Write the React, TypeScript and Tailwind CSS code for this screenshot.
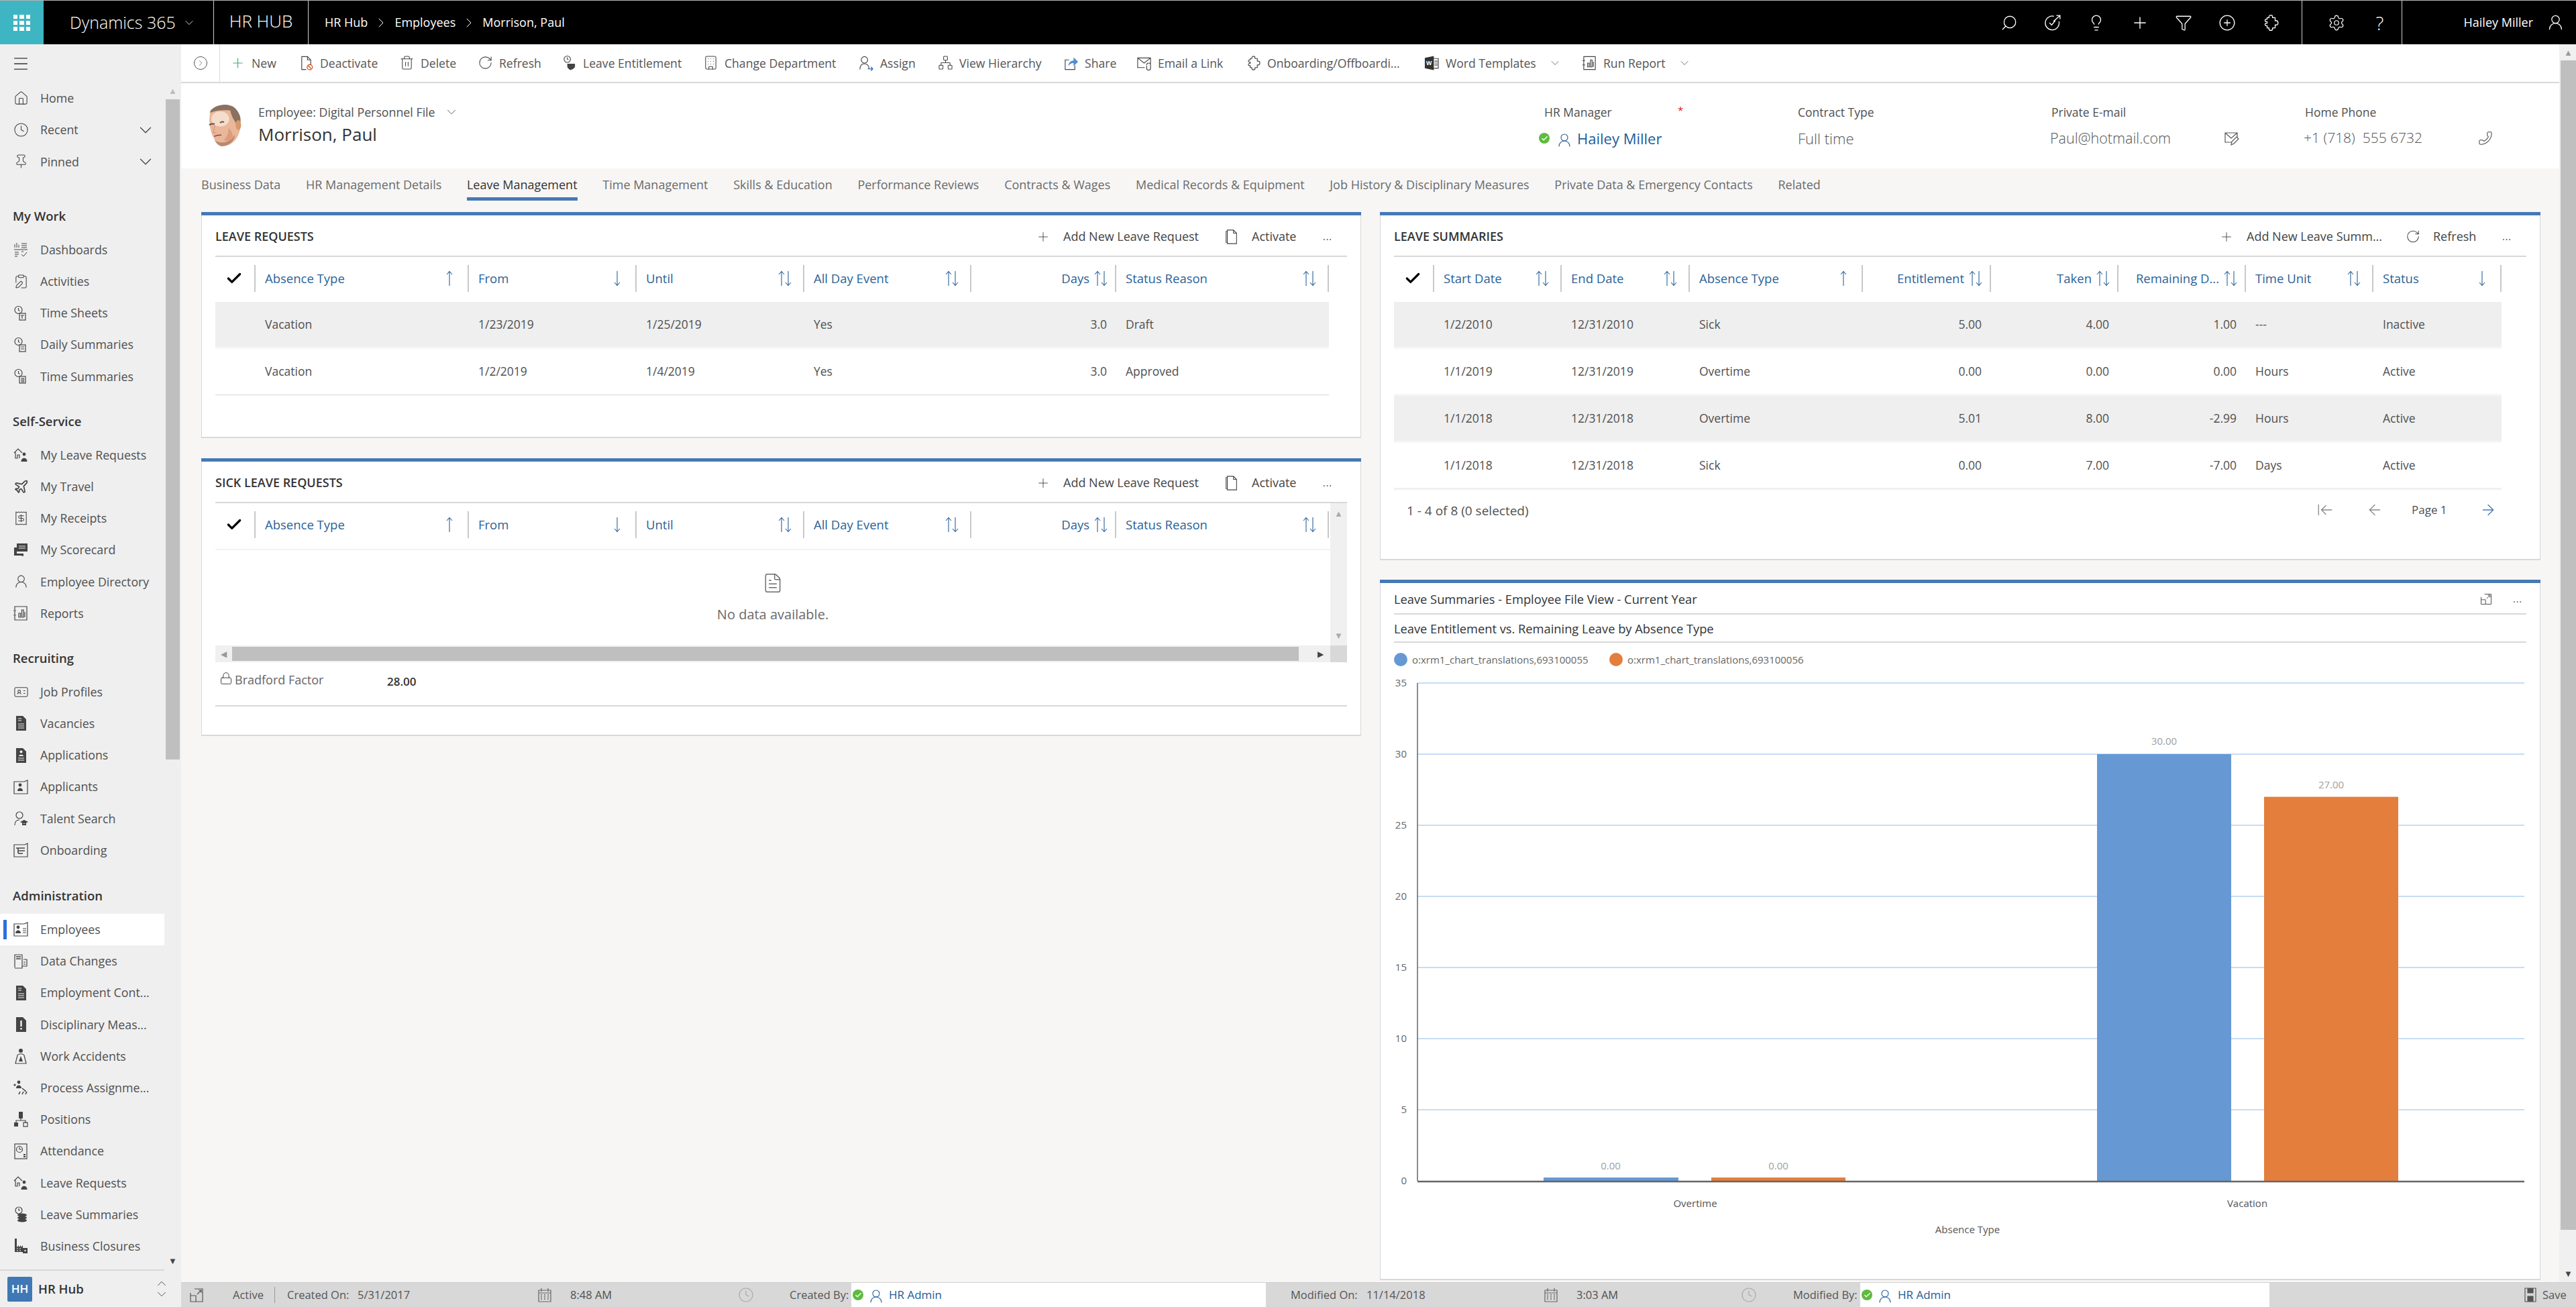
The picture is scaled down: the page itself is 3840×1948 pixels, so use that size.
import type { ReactNode } from "react";
import {
  ArrowLeft,
  ArrowLeftToLine,
  ArrowRight,
  Building,
  Check,
  ChevronDown,
  ChevronRight,
  ChevronUp,
  Clock,
  ClipboardPen,
  FileText,
  Filter,
  House,
  IdCard,
  Lightbulb,
  Lock,
  Menu,
  Network,
  Phone,
  Pin,
  Plane,
  Plus,
  CirclePlus,
  Receipt,
  RotateCw,
  Search,
  Settings,
  Trash2,
  UserRound,
} from "lucide-react";

function Ico({ children, className = "size-[24px]" }: { children: ReactNode; className?: string }) {
  return (
    <svg viewBox="0 0 24 24" fill="none" stroke="currentColor" strokeWidth="1.2" className={className}>
      {children}
    </svg>
  );
}

const thin = { size: 23, strokeWidth: 1.1 };

// ---- custom glyphs
const ClockDoc = ({ kind }: { kind: number }) => (
  <Ico>
    <circle cx="8.5" cy="7" r="5.5" />
    <path d="M8.5 4v3.5l2 1" />
    <rect x="10" y="12" width="9" height="10" fill="#efefef" />
    {kind === 0 && <path d="M12 15h5M14 15v5" />}
    {kind === 1 && <path d="M12 15h5M12 18h5" />}
    {kind === 2 && <path d="M12 15h5M12 17.5h5M12 20h5M14 14v7M16.5 14v7" strokeWidth="0.8" />}
  </Ico>
);
const DashIcon = () => (
  <Ico>
    <path d="M3 4v5M6 2v7M9 5v4M13 3h8M13 6h8M13 9h8M2 12h20M3 16h6M3 19h6M3 22h4M13 19l3 3 5-6M13 15h3" strokeWidth="1" />
  </Ico>
);
const LeaveIcon = () => (
  <Ico>
    <path d="M2 9l6-6 6 6M4 8v9h3v-5h3v5" />
    <circle cx="17" cy="11" r="2.4" fill="currentColor" stroke="none" />
    <path d="M12.5 22c0-7 9-7 9 0z" fill="currentColor" stroke="none" />
  </Ico>
);
const ScoreIcon = () => (
  <Ico>
    <path d="M6 2h16v12H12l-6 0z" fill="currentColor" stroke="none" />
    <path d="M2 8h4v9h10v4l-4-1H2z" fill="currentColor" stroke="none" />
    <path d="M9 6h10M9 9h10" stroke="#efefef" />
  </Ico>
);
const ReportIcon = () => (
  <Ico>
    <path d="M3 7V2h18v20H3v-6" />
    <path d="M1 8h4M1 15h4M3 8v7" />
    <path d="M9 18v-6h2.5v6zM13.5 18V7H16v11zM18 18V10" />
  </Ico>
);
const FilledDoc = ({ mark }: { mark: "lines" | "person" | "bang" }) => (
  <Ico>
    <path d="M5 1h10l5 5v17H5z" fill="currentColor" stroke="none" />
    {mark === "lines" && <path d="M8 5h5M8 8h5M8 13h9M8 16h9M8 19h9" stroke="#efefef" />}
    {mark === "person" && (
      <>
        <circle cx="12.5" cy="6.5" r="2" fill="#efefef" stroke="none" />
        <path d="M9 13c0-3 7-3 7 0z" fill="#efefef" stroke="none" />
        <path d="M8 16h9M8 19h9" stroke="#efefef" />
      </>
    )}
    {mark === "bang" && <path d="M12.5 6v9M12.5 17v2.5" stroke="#efefef" strokeWidth="2.4" />}
  </Ico>
);
const ApplicantIcon = () => (
  <Ico>
    <path d="M2 4h15l5-2v20H2z" />
    <circle cx="11" cy="9" r="2.4" fill="currentColor" stroke="none" />
    <path d="M7 18c0-6 8-6 8 0z" fill="currentColor" stroke="none" />
  </Ico>
);
const TalentIcon = () => (
  <Ico>
    <circle cx="10" cy="7" r="5" />
    <path d="M3 22c0-6 3-8 7-8" />
    <path d="M11 17l6-3 6 3-6 3z M14 19v3h6v-3" fill="currentColor" stroke="none" />
  </Ico>
);
const StairsIcon = () => (
  <Ico>
    <path d="M2 4h16l4-2v20H2z" />
    <path d="M5 9h13M8 13h10M8 17h7M8 9v8" strokeWidth="1.6" />
  </Ico>
);
const EmployeesIcon = () => (
  <Ico>
    <path d="M2 4h15l5-2v20H2z" />
    <circle cx="8" cy="9" r="2.4" fill="currentColor" stroke="none" />
    <path d="M4 18c0-6 8-6 8 0z" fill="currentColor" stroke="none" />
    <path d="M15 11h5M15 14h5M15 17h5" />
  </Ico>
);
const DataChangeIcon = () => (
  <Ico>
    <path d="M3 21V2h11v20H3" />
    <path d="M5 5h7M5 8h7" strokeWidth="1.6" />
    <path d="M16 9h5v10h-7M16 13h3M16 16h3" />
  </Ico>
);
const AccidentIcon = () => (
  <Ico>
    <circle cx="12" cy="4" r="3" fill="currentColor" stroke="none" />
    <path d="M4 23l3-12c1-3 9-3 10 0l3 12z" />
    <path d="M12 12l3 8H9z" fill="currentColor" stroke="none" />
  </Ico>
);
const ProcessIcon = () => (
  <Ico>
    <circle cx="9" cy="4" r="2.4" fill="currentColor" stroke="none" />
    <path d="M5 13c0-6 8-6 8 0z" fill="currentColor" stroke="none" />
    <circle cx="3" cy="8" r="1.6" fill="currentColor" stroke="none" />
    <path d="M14 13l5 4-1 1M9 22l2-4M14 22l2-4M19 22l2-4" strokeWidth="1.6" />
  </Ico>
);
const OrgIcon = () => (
  <Ico>
    <rect x="9" y="1" width="6" height="10" fill="currentColor" stroke="none" />
    <path d="M12 11v3M5 18v-4h14v4" />
    <rect x="2" y="17" width="6" height="6" fill="currentColor" stroke="none" />
    <rect x="16" y="17" width="6" height="6" />
  </Ico>
);
const AttendIcon = () => (
  <Ico>
    <rect x="3" y="1" width="18" height="22" />
    <circle cx="10" cy="9" r="4.5" />
    <path d="M10 6v3h3" />
    <path d="M16 16h3v2h-3zM16 19h3v2h-3z" fill="currentColor" stroke="none" />
  </Ico>
);
const CoinsIcon = () => (
  <Ico>
    <circle cx="9" cy="6" r="5" />
    <path d="M9 3v3h2" />
    <ellipse cx="14" cy="13" rx="7" ry="2.6" fill="currentColor" stroke="none" />
    <ellipse cx="14" cy="17" rx="7" ry="2.6" fill="currentColor" stroke="none" />
    <ellipse cx="14" cy="21" rx="7" ry="2.6" fill="currentColor" stroke="none" />
  </Ico>
);
const ClosureIcon = () => (
  <Ico>
    <path d="M3 1v20h12v-10l-3 3v-3l-3 3v-3l-3 3V1z" fill="currentColor" stroke="none" />
    <rect x="15" y="15" width="7" height="8" fill="currentColor" stroke="none" />
    <path d="M6 16h2M10 16h2M6 19h2M10 19h2" stroke="#efefef" />
    <circle cx="18.5" cy="19" r="1.2" fill="#efefef" stroke="none" />
  </Ico>
);
const DeactivateIcon = () => (
  <Ico>
    <path d="M12 22H5V2h9l5 5v8M14 2v5h5" />
    <circle cx="17.5" cy="18.5" r="4" stroke="#d83b01" />
    <path d="M15 16l5 5" stroke="#d83b01" />
  </Ico>
);
const EntitleIcon = () => (
  <Ico>
    <circle cx="9" cy="6" r="5" />
    <path d="M9 3v3h2" />
    <path d="M9 13h12v4c0 3-4 5-7 6-2-1-5-3-5-6z" fill="currentColor" stroke="none" />
  </Ico>
);
const AssignIcon = () => (
  <Ico>
    <circle cx="9" cy="7" r="5" />
    <path d="M2 22c0-6 3-9 7-9s7 3 7 7" />
    <path d="M14 21h8M19 18l3 3-3 3" stroke="#2b6cb0" />
  </Ico>
);
const ShareIcon = () => (
  <Ico>
    <path d="M9 7H3v15h15v-6" />
    <path d="M8 17c0-6 4-9 8-9V3l7 7-7 7v-5c-3 0-6 1-8 5z" fill="#4f8fd1" stroke="none" />
  </Ico>
);
const EmailLinkIcon = () => (
  <Ico>
    <path d="M13 19H2V4h20v9M2 4l10 8 10-8" />
    <path d="M16 15a3 3 0 0 1 6 0v5a3 3 0 0 1-6 0v-4" />
  </Ico>
);
const WordIcon = () => (
  <Ico>
    <path d="M1 4l14-3v22L1 20z" fill="#333" stroke="none" />
    <path d="M15 5h7v15h-7M16 9h5M16 12h5M16 15h5" />
    <text x="3" y="15" fontSize="9" fill="#fff" stroke="none" fontWeight="700" fontFamily="Open Sans">W</text>
  </Ico>
);
const MailEdit = () => (
  <Ico>
    <path d="M14 18H3V4h18v7M3 4l9 8 9-8" />
    <path d="M12 22l1-5 7-7 3 3-7 7z" fill="#fff" />
  </Ico>
);
const CopyDocIcon = () => (
  <Ico>
    <path d="M5 3H3v18h2" />
    <path d="M5 1h10l5 5v17H5zM15 1v5h5" />
  </Ico>
);
const ChartExpand = () => (
  <Ico className="size-[20px]">
    <path d="M3 8v13h18V3H9" />
    <path d="M3 13h8v8M13 11l6-6M15 5h4v4" />
  </Ico>
);
const SaveIcon = () => (
  <Ico>
    <path d="M4 2h16v20H4z" />
    <path d="M8 2v7h8V2M8 22v-8h8v8" fill="currentColor" />
  </Ico>
);
const CalendarIcon = () => (
  <Ico>
    <path d="M3 5h18v17H3zM3 9h18M7 2v5M17 2v5" />
    <path d="M6 12h2M11 12h2M16 12h2M6 15h2M11 15h2M16 15h2M6 18h2M11 18h2M16 18h2" strokeWidth="1.4" />
  </Ico>
);
const PopOut = () => (
  <Ico>
    <path d="M3 9v13h18V3H9" />
    <path d="M3 13h8v9M13 11l6-6M15 5h4v4" />
  </Ico>
);
const TaskGlyph = () => (
  <Ico className="size-[26px]">
    <path d="M20.5 10a9.5 9.5 0 1 1-7-7" />
    <path d="M7.5 12l3 3 5-6M13 10l9-8M17 2h5v5" />
  </Ico>
);
const PuzzleGlyph = ({ size = "size-[24px]" }: { size?: string }) => (
  <Ico className={size}>
    <path d="M9.5 5V4a2.5 2.5 0 0 1 5 0v1H18v4h1a2.5 2.5 0 0 1 0 6h-1v4h-3.5v1a2.5 2.5 0 0 1-5 0v-1H7v-3H5.5a1.8 1.8 0 0 1 0-3.5H7v-2H5.5a1.8 1.8 0 0 1 0-3.5H7V5z" />
  </Ico>
);

const Presence = () => (
  <span className="flex size-[16px] shrink-0 items-center justify-center rounded-full bg-[#5dbb3f]">
    <Check size={11} strokeWidth={3} className="text-white" />
  </span>
);

const Face = () => (
  <svg viewBox="30 30 150 195" className="h-[65px] w-[50px] shrink-0">
    <path d="M40 70C50 45 110 35 140 60c25 25 40 50 35 80-10 50-35 80-85 82-20-7-35-32-45-62-10-30-10-65-5-90z" fill="#e9b79a" />
    <ellipse cx="85" cy="100" rx="40" ry="34" fill="#f6dccb" />
    <path d="M60 195c30 20 70 10 90-25 0 30-30 52-60 52-15-4-25-17-30-27z" fill="#b98a70" />
    <path d="M120 140c15 10 25 30 20 50-15 10-30 10-40 5 15-15 25-35 20-55z" fill="#dd9d7d" />
    <path d="M40 65C60 35 120 25 150 50c25 25 28 50 25 65l-15 10c-10-15-25-35-30-63-30-2-60-2-90 10z" fill="#8a7160" />
    <ellipse cx="166" cy="127" rx="12" ry="22" fill="#d9986f" />
    <path d="M36 127c5-5 12-7 24-5M84 117c5-5 12-5 18-3" stroke="#5f5148" strokeWidth="6" fill="none" />
    <path d="M58 178c12-5 22-7 32-6" stroke="#8a4a3a" strokeWidth="5" fill="none" />
    <path d="M60 130l-6 30 14 4" stroke="#d79a7e" strokeWidth="4" fill="none" />
  </svg>
);

// ---- nav data
type NavItem = { label: string; icon: ReactNode; active?: boolean };
const navSections: { title: string; top: string; items: NavItem[] }[] = [
  {
    title: "My Work",
    top: "mt-[34px]",
    items: [
      { label: "Dashboards", icon: <DashIcon /> },
      { label: "Activities", icon: <ClipboardPen {...thin} /> },
      { label: "Time Sheets", icon: <ClockDoc kind={0} /> },
      { label: "Daily Summaries", icon: <ClockDoc kind={1} /> },
      { label: "Time Summaries", icon: <ClockDoc kind={2} /> },
    ],
  },
  {
    title: "Self-Service",
    top: "mt-[20px]",
    items: [
      { label: "My Leave Requests", icon: <LeaveIcon /> },
      { label: "My Travel", icon: <Plane size={23} strokeWidth={1.8} /> },
      { label: "My Receipts", icon: <Receipt {...thin} /> },
      { label: "My Scorecard", icon: <ScoreIcon /> },
      { label: "Employee Directory", icon: <UserRound {...thin} /> },
      { label: "Reports", icon: <ReportIcon /> },
    ],
  },
  {
    title: "Recruiting",
    top: "mt-[20px]",
    items: [
      { label: "Job Profiles", icon: <IdCard {...thin} /> },
      { label: "Vacancies", icon: <FilledDoc mark="lines" /> },
      { label: "Applications", icon: <FilledDoc mark="person" /> },
      { label: "Applicants", icon: <ApplicantIcon /> },
      { label: "Talent Search", icon: <TalentIcon /> },
      { label: "Onboarding", icon: <StairsIcon /> },
    ],
  },
  {
    title: "Administration",
    top: "mt-[21px]",
    items: [
      { label: "Employees", icon: <EmployeesIcon />, active: true },
      { label: "Data Changes", icon: <DataChangeIcon /> },
      { label: "Employment Cont...", icon: <FilledDoc mark="lines" /> },
      { label: "Disciplinary Meas...", icon: <FilledDoc mark="bang" /> },
      { label: "Work Accidents", icon: <AccidentIcon /> },
      { label: "Process Assignme...", icon: <ProcessIcon /> },
      { label: "Positions", icon: <OrgIcon /> },
      { label: "Attendance", icon: <AttendIcon /> },
      { label: "Leave Requests", icon: <LeaveIcon /> },
      { label: "Leave Summaries", icon: <CoinsIcon /> },
      { label: "Business Closures", icon: <ClosureIcon /> },
    ],
  },
];

function NavRow({ item, chevron }: { item: NavItem; chevron?: boolean }) {
  return (
    <div className={`flex h-[47.2px] shrink-0 items-center ${item.active ? "bg-white pl-[5px]" : "pl-[19px]"}`}>
      {item.active && <span className="mr-[9px] h-[29px] w-[5px] bg-[#2d6fdc]" />}
      <span className="flex w-[24px] shrink-0 justify-center text-[#444]">{item.icon}</span>
      <span className="ml-[17px] flex-1 whitespace-nowrap text-[17.8px] text-[#505050]">{item.label}</span>
      {chevron && <ChevronDown size={30} strokeWidth={1} className="mr-[13px] text-[#444]" />}
    </div>
  );
}

function Sidebar() {
  return (
    <aside className="flex w-[270px] shrink-0 flex-col bg-[#efefef]">
      <div className="flex h-[57px] shrink-0 items-center pl-[17px]">
        <Menu size={28} strokeWidth={1.2} className="text-[#333]" />
      </div>
      <div className="flex min-h-0 flex-1">
        <nav className="min-w-0 flex-1 overflow-hidden">
          <NavRow item={{ label: "Home", icon: <House {...thin} /> }} />
          <NavRow chevron item={{ label: "Recent", icon: <Clock {...thin} /> }} />
          <NavRow chevron item={{ label: "Pinned", icon: <Pin {...thin} /> }} />
          {navSections.map((s) => (
            <div key={s.title} className={s.top}>
              <div className="mb-[4px] flex h-[46px] items-center pl-[19px] text-[18.5px] font-semibold text-[#333]">{s.title}</div>
              {s.items.map((it) => (
                <NavRow key={it.label} item={it} />
              ))}
            </div>
          ))}
        </nav>
        <div className="flex w-[25px] shrink-0 flex-col px-[2px]">
          <div className="flex h-[25px] shrink-0 items-center justify-center text-[13px] leading-none text-[#bbb]">▲</div>
          <div className="h-[984px] shrink-0 bg-[#bfbfbf]" />
          <div className="mt-auto flex h-[25px] shrink-0 items-center justify-center text-[13px] leading-none text-[#444]">▼</div>
        </div>
      </div>
      <div className="flex h-[56px] shrink-0 flex-col">
        <div className="h-[2px] w-[245px] bg-[#d8d8d8]" />
        <div className="flex flex-1 items-center pl-[11px]">
          <span className="flex h-[37px] w-[37px] items-center justify-center rounded-[2px] bg-[#3f78b5] text-[17px] font-semibold text-white">HH</span>
          <span className="ml-[9px] flex-1 text-[18.5px] font-semibold text-[#333]">HR Hub</span>
          <span className="mr-[18px] flex flex-col text-[#444]">
            <ChevronUp size={22} strokeWidth={1} className="-mb-[6px]" />
            <ChevronDown size={22} strokeWidth={1} />
          </span>
        </div>
      </div>
    </aside>
  );
}

// ---- top bar
function TopBar() {
  const icons = [
    <Search key="a" size={26} strokeWidth={1.2} className="-scale-x-100" />,
    <TaskGlyph key="b" />,
    <Lightbulb key="c" size={26} strokeWidth={1.2} />,
    <Plus key="d" size={28} strokeWidth={1.2} />,
    <Filter key="e" size={26} strokeWidth={1.2} />,
    <CirclePlus key="f" size={26} strokeWidth={1.2} />,
    <PuzzleGlyph key="g" size="size-[26px]" />,
  ];
  return (
    <header className="flex h-[66px] shrink-0 items-center border-t border-[#b4b4b4] bg-black text-white">
      <div className="grid h-full w-[65px] shrink-0 grid-cols-3 content-center justify-center gap-[3px] bg-[#3eb5c3] px-[20px]">
        {Array.from({ length: 9 }).map((_, i) => (
          <span key={i} className="h-[6px] bg-white" />
        ))}
      </div>
      <div className="flex h-full w-[254px] items-center border-r border-[#ccc] pl-[39px]">
        <span className="text-[25px] font-light">Dynamics 365</span>
        <ChevronDown size={20} strokeWidth={1} className="ml-[10px]" />
      </div>
      <div className="flex h-full w-[141px] items-center justify-center border-r border-[#ccc] pb-[5px] text-[26px] font-light">HR HUB</div>
      <div className="flex items-center pl-[24px] text-[18px]">
        <span>HR Hub</span>
        <ChevronRight size={24} strokeWidth={1} className="mx-[8px]" />
        <span>Employees</span>
        <ChevronRight size={24} strokeWidth={1} className="mx-[8px]" />
        <span>Morrison, Paul</span>
      </div>
      <div className="ml-auto flex h-full items-center">
        {icons.map((ic, i) => (
          <span key={i} className="flex w-[65px] justify-center">{ic}</span>
        ))}
        <div className="ml-[14px] flex h-full items-center border-x border-[#ccc] pl-[18px]">
          <span className="flex w-[65px] justify-center"><Settings size={26} strokeWidth={1.1} /></span>
          <span className="flex w-[65px] justify-center text-[28px] font-light">?</span>
        </div>
        <div className="flex h-full w-[259px] items-center justify-end pr-[17px]">
          <span className="text-[18px]">Hailey Miller</span>
          <UserRound size={27} strokeWidth={1.1} className="ml-[20px]" />
        </div>
      </div>
    </header>
  );
}

// ---- command bar
const commands: { label: string; w: string; icon: ReactNode; chevron?: boolean }[] = [
  { label: "New", w: "w-[102px]", icon: <Plus size={28} strokeWidth={1.2} className="text-[#3fae70]" /> },
  { label: "Deactivate", w: "w-[150px]", icon: <DeactivateIcon /> },
  { label: "Delete", w: "w-[117px]", icon: <Trash2 {...thin} /> },
  { label: "Refresh", w: "w-[125px]", icon: <RotateCw {...thin} /> },
  { label: "Leave Entitlement", w: "w-[211px]", icon: <EntitleIcon /> },
  { label: "Change Department", w: "w-[232px]", icon: <Building {...thin} /> },
  { label: "Assign", w: "w-[118px]", icon: <AssignIcon /> },
  { label: "View Hierarchy", w: "w-[187px]", icon: <Network {...thin} /> },
  { label: "Share", w: "w-[109px]", icon: <ShareIcon /> },
  { label: "Email a Link", w: "w-[163px]", icon: <EmailLinkIcon /> },
  { label: "Onboarding/Offboardi...", w: "w-[266px]", icon: <PuzzleGlyph /> },
  { label: "Word Templates", w: "w-[235px]", icon: <WordIcon />, chevron: true },
  { label: "Run Report", w: "w-[180px]", icon: <ReportIcon />, chevron: true },
];

function CommandBar() {
  return (
    <div className="flex h-[58px] shrink-0 border-b-2 border-[#d8d8d8] bg-white">
      <div className="flex w-[58px] shrink-0 items-center justify-center border-r border-[#dcdcdc]">
        <span className="flex size-[20px] items-center justify-center rounded-full border border-[#555] text-[#555]">
          <ChevronRight size={14} strokeWidth={1.2} />
        </span>
      </div>
      <div className="flex items-center pl-[15px]">
        {commands.map((c) => (
          <div key={c.label} className={`flex items-center ${c.w}`}>
            <span className="flex w-[23px] shrink-0 justify-center text-[#444]">{c.icon}</span>
            <span className="ml-[9px] whitespace-nowrap text-[17.6px] text-[#555]">{c.label}</span>
            {c.chevron && <ChevronDown size={20} strokeWidth={1} className="ml-[18px] text-[#555]" />}
          </div>
        ))}
      </div>
    </div>
  );
}

// ---- form header
function FormHeader() {
  return (
    <div className="flex h-[127px] shrink-0 bg-white">
      <div className="flex flex-1 pl-[40px] pt-[30px]">
        <Face />
        <div className="ml-[25px]">
          <div className="flex h-[26px] items-center text-[17.8px] text-[#505050]">
            Employee: Digital Personnel File
            <ChevronDown size={22} strokeWidth={1} className="ml-[13px]" />
          </div>
          <div className="text-[26px] leading-[40px] text-[#333]">Morrison, Paul</div>
        </div>
      </div>
      <HeaderField w="w-[386px]" label="HR Manager" inset="pl-[8px]">
        <div className="flex items-center">
          <Presence />
          <UserRound size={24} strokeWidth={1.1} className="ml-[10px] mt-[6px] text-[#1f5c99]" />
          <span className="ml-[7px] text-[22px] font-medium text-[#1f5c99]">Hailey Miller</span>
        </div>
      </HeaderField>
      <HeaderField w="w-[376px]" label="Contract Type" inset="pl-0">
        <span className="text-[22px] font-light text-[#555]">Full time</span>
      </HeaderField>
      <HeaderField w="w-[378px]" label="Private E-mail" inset="pl-[2px]">
        <div className="flex w-[282px] items-center justify-between text-[21.5px] font-light text-[#555]">
          Paul@hotmail.com
          <MailEdit />
        </div>
      </HeaderField>
      <HeaderField w="w-[381px]" label="Home Phone" inset="pl-[2px]">
        <div className="flex w-[282px] items-center justify-between text-[21px] font-light text-[#555]">
          <span>+1 (718)&nbsp; 555 6732</span>
          <Phone size={22} strokeWidth={1.1} className="-scale-x-100 text-[#444]" />
        </div>
      </HeaderField>
    </div>
  );
}

function HeaderField({ w, label, inset, children }: { w: string; label: string; inset: string; children: ReactNode }) {
  return (
    <div className={`shrink-0 pt-[31px] ${w}`}>
      <div className={`flex h-[24px] items-center text-[17.5px] text-[#505050] ${inset}`}>
        <span className={label === "HR Manager" ? "w-[199px]" : ""}>{label}</span>
        {label === "HR Manager" && <span className="-mt-[6px] text-[15px] text-[#e81123]">*</span>}
      </div>
      <div className="mt-[10px] flex h-[34px] items-center">{children}</div>
    </div>
  );
}

const tabs = [
  "Business Data",
  "HR Management Details",
  "Leave Management",
  "Time Management",
  "Skills & Education",
  "Performance Reviews",
  "Contracts & Wages",
  "Medical Records & Equipment",
  "Job History & Disciplinary Measures",
  "Private Data & Emergency Contacts",
  "Related",
];

function Tabs() {
  return (
    <div className="flex h-[65px] shrink-0 gap-[37.7px] pl-[30px] pt-[9px]">
      {tabs.map((t) => (
        <div
          key={t}
          className={`flex h-[39px] items-center whitespace-nowrap border-b-[5px] pb-[4px] text-[18px] ${
            t === "Leave Management" ? "border-[#4679b4] font-medium text-[#333]" : "border-transparent text-[#6b6b6b]"
          }`}
        >
          {t}
        </div>
      ))}
    </div>
  );
}

// ---- grids
type Sort = "up" | "down" | "both";
type Col = { label: string; w: string; sort: Sort; right?: boolean };

function SortIcon({ sort }: { sort: Sort }) {
  return (
    <svg viewBox="0 0 22 26" fill="none" stroke="#2b6298" strokeWidth="1.1" className="h-[26px] w-[22px] shrink-0">
      {sort === "up" && <path d="M11 24V3M7 7l4-4.5L15 7" />}
      {sort === "down" && <path d="M11 2v21M7 19l4 4.5 4-4.5" />}
      {sort === "both" && <path d="M6 24V3M2 7l4-4.5L10 7M16 2v21M12 19l4 4.5 4-4.5" />}
    </svg>
  );
}

function GridHeader({ cols }: { cols: Col[] }) {
  return (
    <div className="mt-[12px] flex h-[40px]">
      <div className="flex w-[60px] shrink-0 items-center justify-center border-r-2 border-[#c8c8c8] pr-[3px]">
        <Check size={26} strokeWidth={3} className="text-black" />
      </div>
      {cols.map((c) => (
        <div key={c.label} className={`flex shrink-0 items-center border-r-2 border-[#c8c8c8] ${c.w} ${c.right ? "justify-end pr-[10px]" : "justify-between pl-[14px] pr-[16px]"}`}>
          <span className="whitespace-nowrap text-[18.5px] text-[#2b6298]">{c.label}</span>
          <span className={c.right ? "ml-[6px]" : ""}>
            <SortIcon sort={c.sort} />
          </span>
        </div>
      ))}
    </div>
  );
}

function GridRows({ cols, rows }: { cols: Col[]; rows: string[][] }) {
  return (
    <div className="mt-[15px]">
      {rows.map((r, i) => (
        <div
          key={i}
          className={`flex h-[70px] w-fit items-center pb-px text-[17.5px] text-[#505050] ${i % 2 === 0 ? "bg-[#efefef]" : ""} ${
            i === rows.length - 1 ? "border-b-[3px] border-[#f0f0f0]" : "border-b-[3px] border-[#f6f6f6]"
          }`}
        >
          <div className="w-[60px] shrink-0" />
          {cols.map((c, j) => (
            <div key={c.label} className={`shrink-0 whitespace-nowrap ${c.w} ${c.right ? "pr-[14px] text-right" : "pl-[14px]"}`}>
              {r[j]}
            </div>
          ))}
        </div>
      ))}
    </div>
  );
}

const leaveCols: Col[] = [
  { label: "Absence Type", w: "w-[318px]", sort: "up" },
  { label: "From", w: "w-[250px]", sort: "down" },
  { label: "Until", w: "w-[250px]", sort: "both" },
  { label: "All Day Event", w: "w-[249px]", sort: "both" },
  { label: "Days", w: "w-[216px]", sort: "both", right: true },
  { label: "Status Reason", w: "w-[317px]", sort: "both" },
];

const summaryCols: Col[] = [
  { label: "Start Date", w: "w-[190px]", sort: "both" },
  { label: "End Date", w: "w-[191px]", sort: "both" },
  { label: "Absence Type", w: "w-[258px]", sort: "up" },
  { label: "Entitlement", w: "w-[191px]", sort: "both", right: true },
  { label: "Taken", w: "w-[190px]", sort: "both", right: true },
  { label: "Remaining D...", w: "w-[190px]", sort: "both", right: true },
  { label: "Time Unit", w: "w-[190px]", sort: "both" },
  { label: "Status", w: "w-[191px]", sort: "down" },
];

function Card({ title, actions, className, children }: { title: string; actions: ReactNode; className?: string; children: ReactNode }) {
  return (
    <section className={`flex flex-col border-x border-b-2 border-[#d8d8d8] border-t-0 bg-white ${className ?? ""}`}>
      <div className="-mx-px h-[5px] shrink-0 bg-[#4679b4]" />
      <div className="mx-[20px] flex-1">
        <div className="flex h-[62px] items-center justify-between border-b-2 border-[#d8d8d8] pt-[3px]">
          <h2 className="text-[18px] font-semibold text-[#333]">{title}</h2>
          <div className="flex items-center">{actions}</div>
        </div>
        {children}
      </div>
    </section>
  );
}

function Act({ icon, label, w }: { icon: ReactNode; label: string; w: string }) {
  return (
    <div className={`flex items-center text-[18px] text-[#444] ${w}`}>
      <span className="flex w-[22px] shrink-0 justify-center">{icon}</span>
      <span className="ml-[19px] whitespace-nowrap">{label}</span>
    </div>
  );
}

const Dots = () => <span className="mr-[20px] w-[18px] text-center text-[14px] leading-none tracking-[1px] text-[#444]">...</span>;

const plusSm = <Plus size={28} strokeWidth={1} />;

function LeaveRequests() {
  return (
    <Card
      title="LEAVE REQUESTS"
      className="h-[337px]"
      actions={
        <>
          <Act icon={plusSm} label="Add New Leave Request" w="w-[281px]" />
          <Act icon={<CopyDocIcon />} label="Activate" w="w-[145px]" />
          <Dots />
        </>
      }
    >
      <GridHeader cols={leaveCols} />
      <GridRows
        cols={leaveCols}
        rows={[
          ["Vacation", "1/23/2019", "1/25/2019", "Yes", "3.0", "Draft"],
          ["Vacation", "1/2/2019", "1/4/2019", "Yes", "3.0", "Approved"],
        ]}
      />
    </Card>
  );
}

function SickLeave() {
  return (
    <Card
      title="SICK LEAVE REQUESTS"
      className="h-[414px]"
      actions={
        <>
          <Act icon={plusSm} label="Add New Leave Request" w="w-[281px]" />
          <Act icon={<CopyDocIcon />} label="Activate" w="w-[145px]" />
          <Dots />
        </>
      }
    >
      <div className="flex h-[212px]">
        <div className="min-w-0 flex-1">
          <GridHeader cols={leaveCols} />
          <div className="mt-[16px] h-[2px] bg-[#f2f2f2]" />
          <div className="flex flex-col items-center pt-[33px] text-[#6b6b6b]">
            <FileText size={32} strokeWidth={1.1} />
            <span className="mt-[16px] text-[20px]">No data available.</span>
          </div>
        </div>
        <div className="flex w-[25px] shrink-0 flex-col justify-between bg-[#f0f0f0] py-[5px] text-center text-[13px] leading-[20px] text-[#aaa]">
          <span>▲</span>
          <span>▼</span>
        </div>
      </div>
      <div className="flex h-[25px] bg-[#f0f0f0] text-[12px] leading-[25px]">
        <span className="w-[25px] shrink-0 text-center text-[#999]">◀</span>
        <div className="my-[2px] w-[1590px] shrink-0 bg-[#bfbfbf]" />
        <span className="flex-1 pl-[28px] text-[#444]">▶</span>
        <span className="w-[25px] shrink-0 bg-[#d8d8d8]" />
      </div>
      <div className="flex h-[66px] items-start border-b-2 border-[#d8d8d8] pt-[13px]">
        <Lock size={20} strokeWidth={1.1} className="ml-[6px] mt-[1px] text-[#333]" />
        <span className="ml-[3px] w-[227px] text-[18px] text-[#666]">Bradford Factor</span>
        <span className="mt-[3px] text-[17px] font-semibold text-[#333]">28.00</span>
      </div>
    </Card>
  );
}

const summaryRows = [
  ["1/2/2010", "12/31/2010", "Sick", "5.00", "4.00", "1.00", "---", "Inactive"],
  ["1/1/2019", "12/31/2019", "Overtime", "0.00", "0.00", "0.00", "Hours", "Active"],
  ["1/1/2018", "12/31/2018", "Overtime", "5.01", "8.00", "-2.99", "Hours", "Active"],
  ["1/1/2018", "12/31/2018", "Sick", "0.00", "7.00", "-7.00", "Days", "Active"],
];

function LeaveSummaries() {
  return (
    <Card
      title="LEAVE SUMMARIES"
      className="h-[519px] shrink-0"
      actions={
        <>
          <Act icon={plusSm} label="Add New Leave Summ..." w="w-[278px]" />
          <Act icon={<RotateCw {...thin} />} label="Refresh" w="w-[142px]" />
          <Dots />
        </>
      }
    >
      <GridHeader cols={summaryCols} />
      <GridRows cols={summaryCols} rows={summaryRows} />
      <div className="flex h-[58px] items-center pl-[19px] pr-[44px] text-[#505050]">
        <span className="pt-[5px] text-[19px]">1 - 4 of 8 (0 selected)</span>
        <div className="ml-auto flex items-center pt-[2px] text-[#888]">
          <ArrowLeftToLine size={26} strokeWidth={1.2} />
          <ArrowLeft size={26} strokeWidth={1.2} className="ml-[48px]" />
          <span className="ml-[42px] w-[58px] text-[17px] text-[#505050]">Page 1</span>
          <ArrowRight size={26} strokeWidth={1.2} className="ml-[43px] text-[#4679b4]" />
        </div>
      </div>
    </Card>
  );
}

const yFor = (v: number) => 1764 - v * 21.2;

function ChartCard() {
  return (
    <section className="flex min-h-0 flex-1 flex-col border-x border-b-2 border-[#d8d8d8] bg-white">
      <div className="-mx-px h-[5px] shrink-0 bg-[#4679b4]" />
      <div className="mx-[20px] flex h-[47px] shrink-0 items-center justify-between border-b-2 border-[#d8d8d8] pt-[2px] text-[18.3px] text-[#333]">
        Leave Summaries - Employee File View - Current Year
        <div className="flex items-center text-[#555]">
          <ChartExpand />
          <span className="ml-[28px] mr-[4px] w-[18px] text-center text-[14px] leading-none tracking-[1px]">...</span>
        </div>
      </div>
      <div className="mx-[20px] flex h-[42px] shrink-0 items-center border-b-2 border-[#d8d8d8] pt-[2px] text-[18.3px] text-[#333]">
        Leave Entitlement vs. Remaining Leave by Absence Type
      </div>
      <div className="mx-[20px] flex h-[48px] shrink-0 items-center pt-[2px] text-[15px] text-[#666]">
        <span className="size-[20px] rounded-full bg-[#6699d3]" />
        <span className="ml-[7px] w-[294px]">o:xrm1_chart_translations,693100055</span>
        <span className="size-[20px] rounded-full bg-[#e47e3c]" />
        <span className="ml-[7px]">o:xrm1_chart_translations,693100056</span>
      </div>
      <svg viewBox="2078 1010 1708 896" className="ml-[20px] block h-[896px] w-[1708px]" fontFamily="'Open Sans', sans-serif" fontSize="15">
        {[35, 30, 25, 20, 15, 10, 5].map((v) => (
          <g key={v}>
            <line x1="2113" x2="3763" y1={yFor(v)} y2={yFor(v)} stroke="#c6ddf6" strokeWidth="2" />
            <text x="2097" y={yFor(v) + 5} textAnchor="end" fill="#666">{v}</text>
          </g>
        ))}
        <text x="2097" y="1769" textAnchor="end" fill="#666">0</text>
        <line x1="2113" x2="2113" y1="1022" y2="1764" stroke="#666" strokeWidth="1.5" />
        <rect x="2301" y="1759" width="201" height="5" fill="#6699d3" />
        <rect x="2551" y="1759" width="200" height="5" fill="#e47e3c" />
        <rect x="3126" y={yFor(30)} width="200" height={1764 - yFor(30)} fill="#6699d3" />
        <rect x="3375" y={yFor(27)} width="200" height={1764 - yFor(27)} fill="#e47e3c" />
        <line x1="2113" x2="3763" y1="1765" y2="1765" stroke="#666" strokeWidth="2.5" />
        <text x="2401" y="1747" textAnchor="middle" fill="#a0a0a0">0.00</text>
        <text x="2651" y="1747" textAnchor="middle" fill="#a0a0a0">0.00</text>
        <text x="3226" y="1114" textAnchor="middle" fill="#a0a0a0">30.00</text>
        <text x="3475" y="1179" textAnchor="middle" fill="#a0a0a0">27.00</text>
        <text x="2527" y="1803" textAnchor="middle" fill="#555">Overtime</text>
        <text x="3350" y="1803" textAnchor="middle" fill="#555">Vacation</text>
        <text x="2933" y="1842" textAnchor="middle" fill="#555">Absence Type</text>
      </svg>
    </section>
  );
}

// ---- status bar
const CheckPerson = () => (
  <>
    <Presence />
    <UserRound size={24} strokeWidth={1.1} className="ml-[7px] mt-[4px] text-[#1f5c99]" />
    <span className="ml-[7px] text-[17px] font-medium text-[#1f5c99]">HR Admin</span>
  </>
);

function StatusBar() {
  return (
    <footer className="flex h-[37px] shrink-0 items-center border-t border-[#cfcfcf] bg-[#d8d8d8] text-[16.5px] text-[#555]">
      <div className="flex w-[139px] shrink-0 items-center pl-[11px]">
        <PopOut />
        <span className="ml-[42px]">Active</span>
      </div>
      <span className="h-[24px] w-px shrink-0 bg-[#999]" />
      <div className="flex w-[390px] shrink-0 items-center pl-[18px]">
        <span className="w-[105px]">Created On:</span>
        <span>5/31/2017</span>
      </div>
      <div className="flex w-[300px] shrink-0 items-center text-[#666]">
        <CalendarIcon />
        <span className="ml-[26px] text-[#505050]">8:48 AM</span>
      </div>
      <div className="flex w-[77px] shrink-0 text-[#aaa]"><Clock size={24} strokeWidth={1.2} /></div>
      <div className="w-[92px] shrink-0">Created By:</div>
      <div className="flex h-full w-[618px] shrink-0 items-center bg-white pl-[2px]">
        <CheckPerson />
      </div>
      <div className="flex w-[413px] shrink-0 items-center pl-[37px]">
        <span className="w-[113px]">Modified On:</span>
        <span>11/14/2018</span>
      </div>
      <div className="flex w-[295px] shrink-0 items-center text-[#666]">
        <CalendarIcon />
        <span className="ml-[26px] text-[#505050]">3:03 AM</span>
      </div>
      <div className="flex w-[78px] shrink-0 text-[#aaa]"><Clock size={24} strokeWidth={1.2} /></div>
      <div className="w-[100px] shrink-0">Modified By:</div>
      <div className="flex h-full w-[610px] shrink-0 items-center bg-white pl-[2px]">
        <CheckPerson />
      </div>
      <div className="flex flex-1 items-center pl-[377px]">
        <SaveIcon />
        <span className="ml-[6px]">Save</span>
      </div>
    </footer>
  );
}

export default function App() {
  return (
    <div className="flex h-screen w-screen flex-col overflow-hidden bg-[#f7f6f5] font-['Open_Sans',sans-serif]">
      <TopBar />
      <div className="flex min-h-0 flex-1">
        <Sidebar />
        <div className="flex min-w-0 flex-1 flex-col">
          <div className="flex min-h-0 flex-1">
            <main className="flex min-w-0 flex-1 flex-col">
              <CommandBar />
              <FormHeader />
              <Tabs />
              <div className="flex min-h-0 flex-1 gap-[28px] pb-[3px] pl-[30px] pr-[28px]">
                <div className="flex w-[1729px] shrink-0 flex-col gap-[30px]">
                  <LeaveRequests />
                  <SickLeave />
                </div>
                <div className="flex min-w-0 flex-1 flex-col gap-[29px]">
                  <LeaveSummaries />
                  <ChartCard />
                </div>
              </div>
            </main>
            <div className="flex w-[25px] shrink-0 flex-col bg-[#f0f0f0] pl-[2px] text-[#999]">
              <div className="flex h-[24px] items-center justify-center text-[13px] leading-none">▲</div>
              <div className="h-[1743px] shrink-0 bg-[#bfbfbf]" />
              <div className="mt-auto flex h-[25px] items-center justify-center text-[13px] leading-none text-[#444]">▼</div>
            </div>
          </div>
          <StatusBar />
        </div>
      </div>
    </div>
  );
}
